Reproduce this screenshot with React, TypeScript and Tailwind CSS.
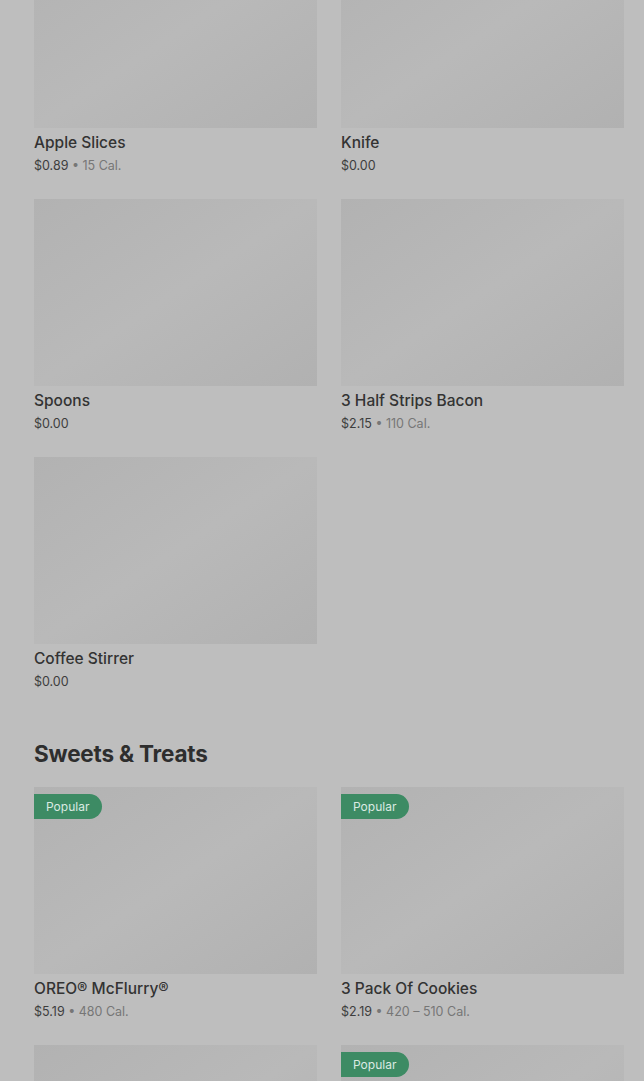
import type { ReactNode } from 'react'

type Item = {
  name?: string
  price?: string
  cal?: string
  popular?: boolean
}

const sides: Item[] = [
  { name: 'Apple Slices', price: '$0.89', cal: '15 Cal.' },
  { name: 'Knife', price: '$0.00' },
  { name: 'Spoons', price: '$0.00' },
  { name: '3 Half Strips Bacon', price: '$2.15', cal: '110 Cal.' },
  { name: 'Coffee Stirrer', price: '$0.00' },
]

// last row is cut off by the viewport, only the pictures show
const sweets: Item[] = [
  { name: 'OREO® McFlurry®', price: '$5.19', cal: '480 Cal.', popular: true },
  { name: '3 Pack Of Cookies', price: '$2.19', cal: '420 – 510 Cal.', popular: true },
  {},
  { popular: true },
]

function Grid({ children }: { children: ReactNode }) {
  return <div className="grid grid-cols-[283px_283px] gap-x-6">{children}</div>
}

function ItemCard({ item }: { item: Item }) {
  return (
    <div className="flex flex-col pb-[23px]">
      <div className="relative h-[187px] bg-linear-to-br from-[#b2b2b2] via-[#b9b9b9] to-[#b1b1b1]">
        {item.popular && (
          <span className="absolute left-0 top-[7px] flex h-[25px] items-center rounded-r-full bg-[#3d8b64] pl-3 pr-[13px] text-[12px] leading-none text-[#dbeae2]">
            Popular
          </span>
        )}
      </div>
      {item.name && (
        <>
          <p className="mt-[5px] text-[15.5px] leading-5 font-medium text-[#333333]">{item.name}</p>
          <p className="mt-[3px] text-[12.5px] leading-5 text-[#3d3d3d]">
            {item.price}
            {item.cal && (
              <span className="text-[#767676]">
                {' • '}
                {item.cal}
              </span>
            )}
          </p>
        </>
      )}
    </div>
  )
}

export default function App() {
  return (
    <div
      className="h-[1081px] overflow-hidden bg-[#bebebe] pl-[34px]"
      style={{ fontFamily: 'Inter, "Noto Sans", sans-serif' }}
    >
      <div className="mt-[-59px]">
        <Grid>
          {sides.map(item => (
            <ItemCard key={item.name} item={item} />
          ))}
        </Grid>

        {/* ─── Sweets & Treats ─── */}
        <h2 className="mt-[23px] mb-[17px] text-[22.5px] leading-8 font-bold tracking-[-0.2px] text-[#2e2e2e]">
          Sweets &amp; Treats
        </h2>
        <Grid>
          {sweets.map((item, i) => (
            <ItemCard key={i} item={item} />
          ))}
        </Grid>
      </div>
    </div>
  )
}
